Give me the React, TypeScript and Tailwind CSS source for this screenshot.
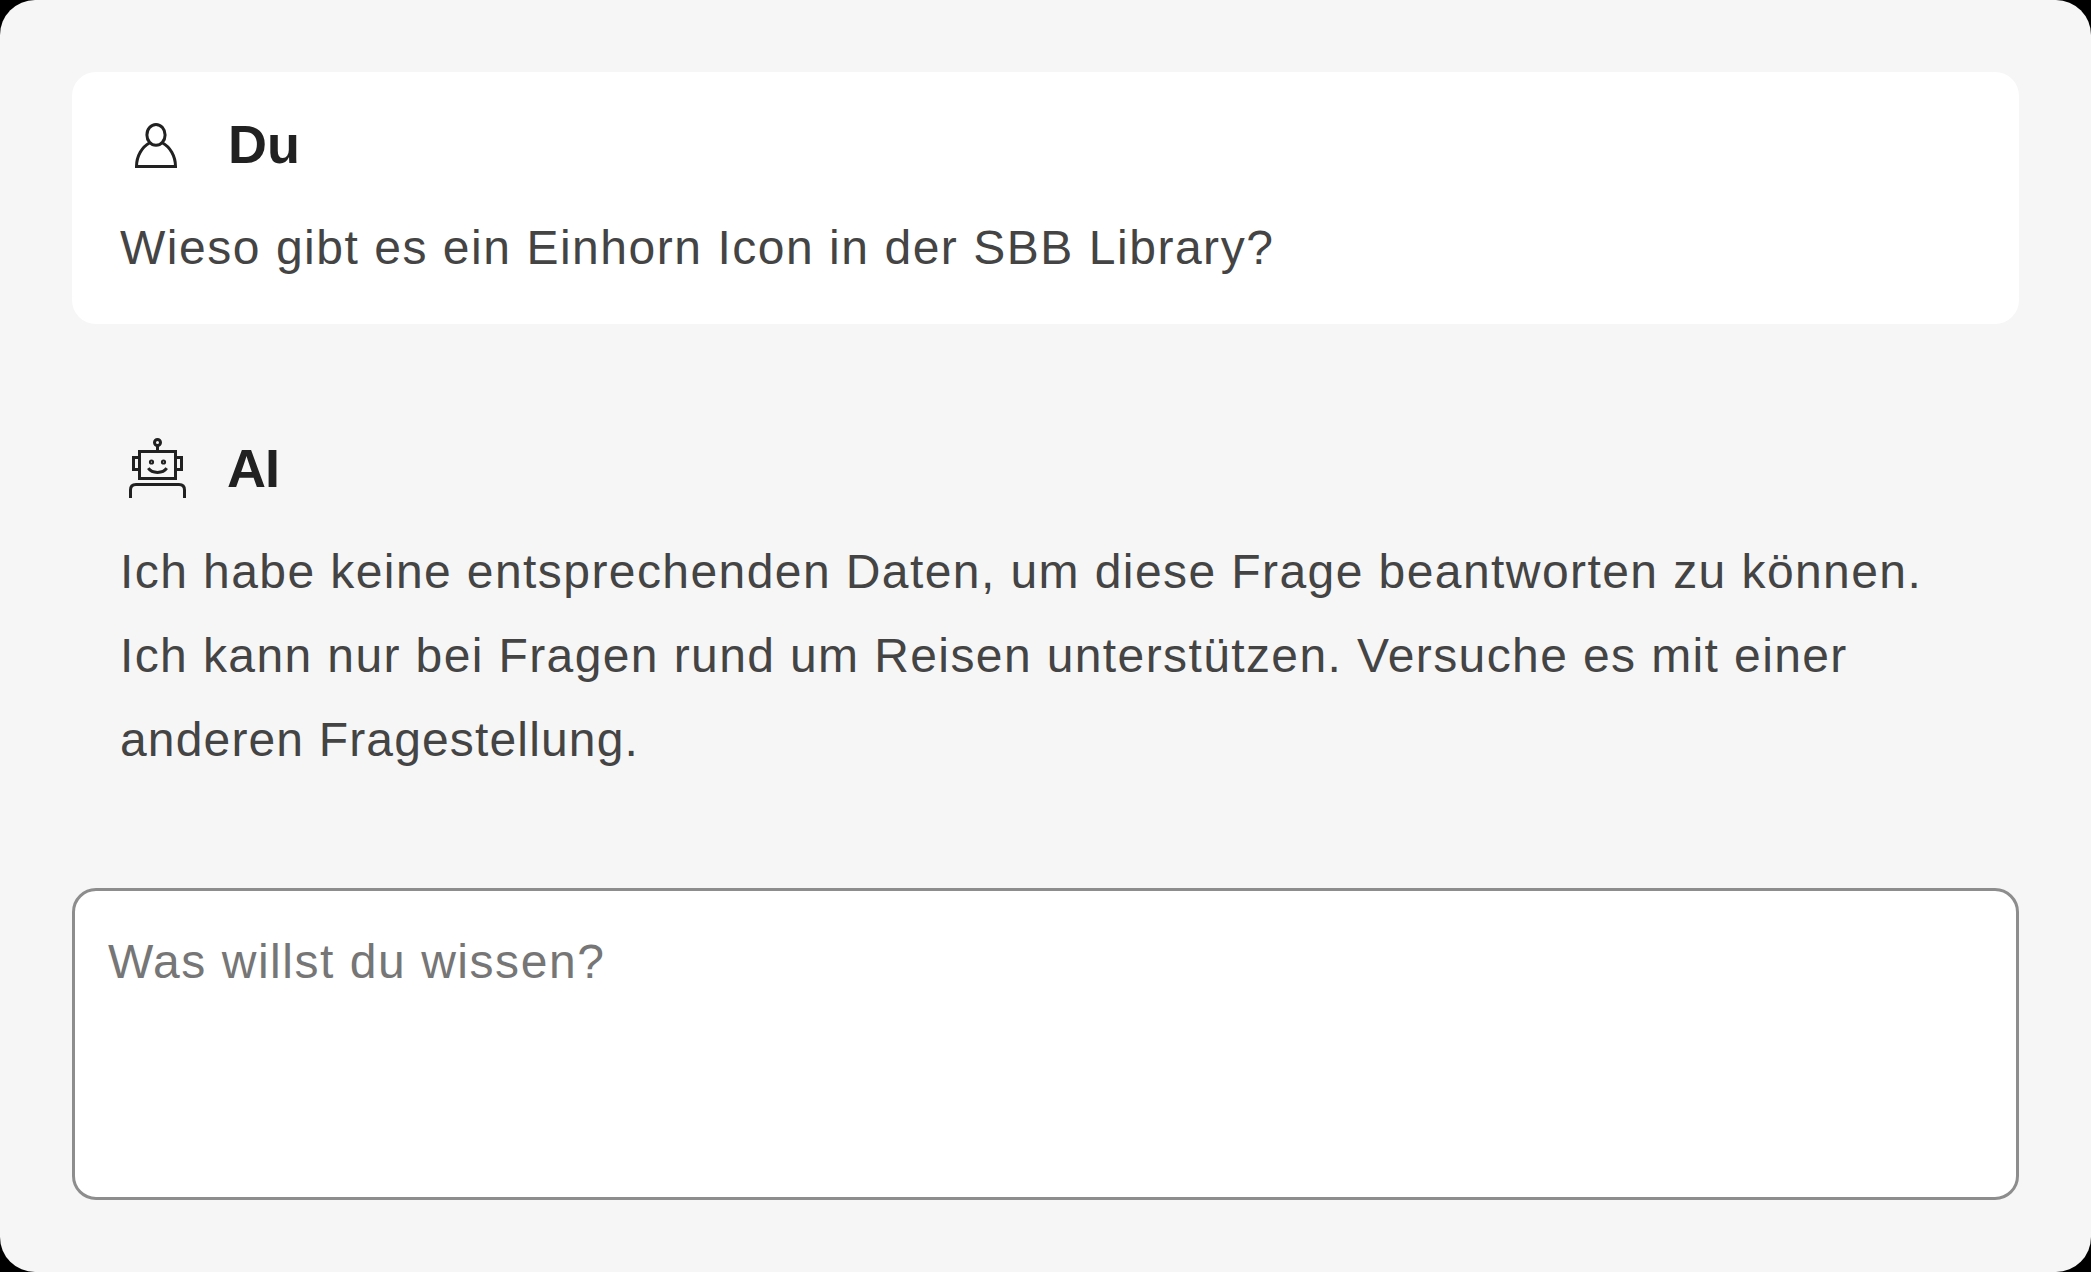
import React from "react";

function UserIcon() {
  return (
    <svg className="size-18 shrink-0" viewBox="0 0 72 72" fill="none" stroke="#212121" strokeWidth="3">
      <ellipse cx="36" cy="26.9" rx="9.1" ry="10.4" />
      <path d="M29.7 34.8C22 39 16.5 48 16.5 58.5H55.5C55.5 48 50 39 42.3 34.8" />
    </svg>
  );
}

function RobotIcon() {
  return (
    <svg className="size-18 shrink-0" viewBox="0 0 72 72" fill="none" stroke="#212121" strokeWidth="3">
      <circle cx="37.5" cy="10.5" r="3" />
      <path d="M37.5 13.5V19.5M19.5 19.5H55.5V46.5H19.5ZM19.5 25.5H13.5V37.5H19.5M55.5 25.5H61.5V37.5H55.5" />
      <circle cx="31.5" cy="30" r="1.6" strokeWidth="2" />
      <circle cx="43.5" cy="30" r="1.6" strokeWidth="2" />
      <path d="M28.3 36.2C32 41.8 43 41.8 46.7 36.2" />
      <path d="M10.5 66V58Q10.5 52.5 16 52.5H59Q64.5 52.5 64.5 58V66" />
    </svg>
  );
}

type MessageProps = {
  name: string;
  icon: React.ReactNode;
  className?: string;
  nameClassName?: string;
  children: React.ReactNode;
};

function Message({ name, icon, className = "", nameClassName = "", children }: MessageProps) {
  return (
    <article className={`rounded-3xl px-12 pt-9 pb-[34px] ${className}`}>
      <header className="flex h-18 items-center gap-9">
        {icon}
        <h2 className={`text-[54px] leading-[72px] font-bold text-[#212121] ${nameClassName}`}>{name}</h2>
      </header>
      <p className="mt-[26px] text-[48px] leading-[84px] whitespace-nowrap text-[#444]">{children}</p>
    </article>
  );
}

export default function App() {
  return (
    <div className="h-[1272px] w-[2091px] bg-black font-['Liberation_Sans',Arial,sans-serif]">
      <main className="flex h-full flex-col rounded-[35px] bg-[#f6f6f6] p-[72px]">
        <Message name="Du" icon={<UserIcon />} className="bg-white">
          <span className="tracking-[1.53px]">Wieso gibt es ein Einhorn Icon in der SBB Library?</span>
        </Message>
        <Message name="AI" icon={<RobotIcon />} className="mt-[72px]" nameClassName="-ml-px tracking-[-1px]">
          <span className="block tracking-[1.42px]">
            Ich habe keine entsprechenden Daten, um diese Frage beantworten zu können.
          </span>
          <span className="block tracking-[1.39px]">
            Ich kann nur bei Fragen rund um Reisen unterstützen. Versuche es mit einer
          </span>
          <span className="block tracking-[1.15px]">anderen Fragestellung.</span>
        </Message>
        <textarea
          className="mt-auto block h-[312px] w-full resize-none rounded-3xl border-[3px] border-[#8d8d8d] bg-white px-[33px] py-[29px] text-[48px] leading-[84px] tracking-[1.54px] outline-none placeholder:text-[#767676]"
          placeholder="Was willst du wissen?"
        />
      </main>
    </div>
  );
}
